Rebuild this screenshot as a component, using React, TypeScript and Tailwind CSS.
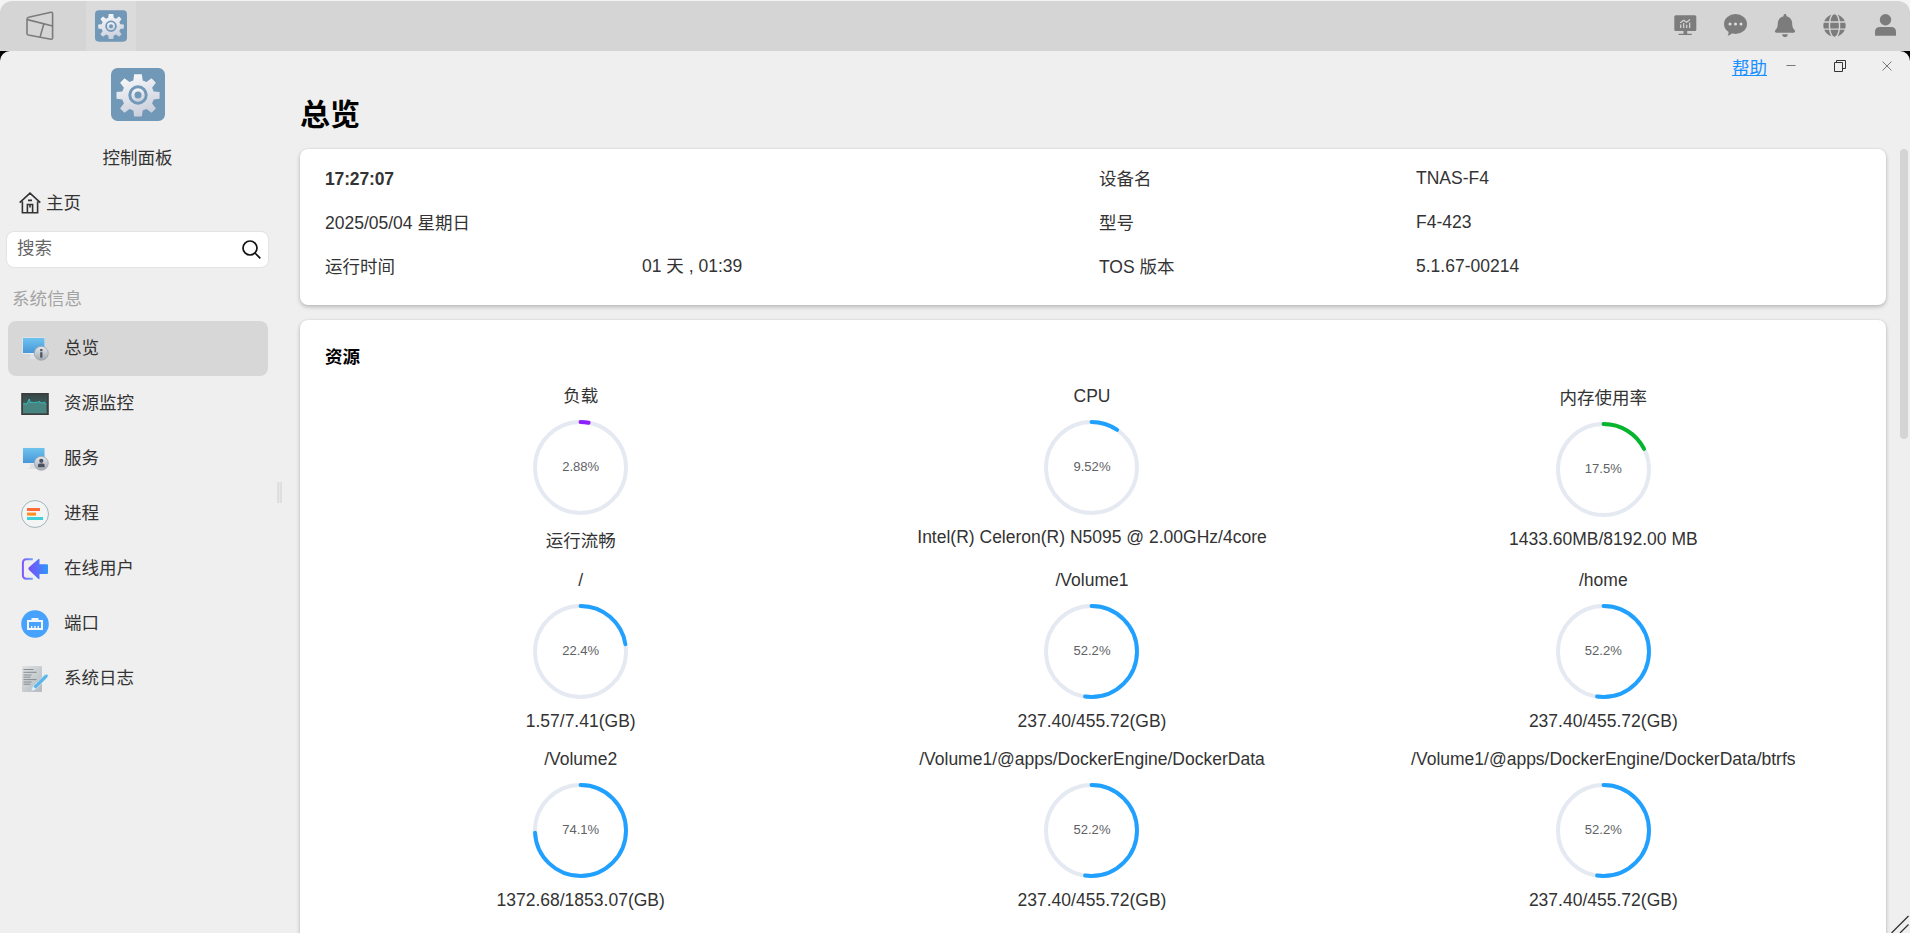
import React from 'react';
import { FaBell, FaGlobe } from 'react-icons/fa';

interface Gauge {
  title: string;
  percent: number;
  detail: string;
  color: string;
  className?: string;
  detailClassName?: string;
}

const BLUE = '#20a0ff';

const GAUGES: Gauge[] = [
  { title: '负载', percent: 2.88, detail: '运行流畅', color: '#8e1fff', detailClassName: 'pt-[4px]' },
  { title: 'CPU', percent: 9.52, detail: 'Intel(R) Celeron(R) N5095 @ 2.00GHz/4core', color: BLUE },
  { title: '内存使用率', percent: 17.5, detail: '1433.60MB/8192.00 MB', color: '#06b52d', className: 'pt-[2px]' },
  { title: '/', percent: 22.4, detail: '1.57/7.41(GB)', color: BLUE },
  { title: '/Volume1', percent: 52.2, detail: '237.40/455.72(GB)', color: BLUE },
  { title: '/home', percent: 52.2, detail: '237.40/455.72(GB)', color: BLUE },
  { title: '/Volume2', percent: 74.1, detail: '1372.68/1853.07(GB)', color: BLUE },
  { title: '/Volume1/@apps/DockerEngine/DockerData', percent: 52.2, detail: '237.40/455.72(GB)', color: BLUE },
  { title: '/Volume1/@apps/DockerEngine/DockerData/btrfs', percent: 52.2, detail: '237.40/455.72(GB)', color: BLUE },
];

/* ---------- Icons ---------- */

function GearIcon({ id, className }: { id: string; className: string }) {
  return (
    <svg viewBox="0 0 54 53" className={className}>
      <defs>
        <linearGradient id={id} x1="0.3" y1="0" x2="0.6" y2="1">
          <stop offset="0" stopColor="#f7f8fa" />
          <stop offset="1" stopColor="#c9cedb" />
        </linearGradient>
      </defs>
      <rect width="54" height="53" rx="6.5" fill="#7298b8" />
      <g fill={`url(#${id})`}>
        <path
          fillRule="evenodd"
          d="M23.2 6.2h7.6l.9 6.3 3.8 1.6 5-3.8 4.4 4.4-3.8 5 1.6 3.8 5.9.6v6.6l-5.900.9-1.600 3.800 3.800 5-4.400 4.400-5-3.800-3.800 1.600-.9 5.800h-7.600l-.9-5.800-3.800-1.600-5 3.800-4.400-4.400 3.800-5-1.600-3.800-5.800-.9v-6.600l5.800-.6 1.600-3.800-3.800-5 4.400-4.400 5 3.800 3.800-1.600zM27 17.300a9.700 9.700 0 1 0 0 19.400 9.700 9.700 0 0 0 0-19.400z"
        />
        <path fillRule="evenodd" d="M27 20.3a6.7 6.7 0 1 1 0 13.4 6.7 6.7 0 0 1 0-13.4zm0 3.2a3.5 3.5 0 1 0 0 7 3.5 3.5 0 0 0 0-7z" />
      </g>
    </svg>
  );
}

function LogoIcon() {
  return (
    <svg viewBox="0 0 28 30" className="h-[30px] w-7" fill="none" stroke="#7c7c7c" strokeWidth="1.6" strokeLinejoin="round">
      <path d="M2.6 6.2 25 1.2q1.6-.2 1.6 1.5v24q0 1.8-1.6 1.5L2.3 24Q1 23.7 1 22.2V8.2q0-1.7 1.6-2z" />
      <path d="M1.4 8.6 26.6 15M17.8 13 14 26.4" />
    </svg>
  );
}

function HomeIcon() {
  return (
    <svg viewBox="0 0 22 22" className="h-[22px] w-[22px]" fill="none" stroke="#333" strokeWidth="1.6">
      <path d="M.7 10.6 11 1.2l10.3 9.400M3.400 9.600v11.200h15.200V9.600M8.400 20.800v-8.300h5.200v8.300M9 8.400h4M11 12.600v3" />
    </svg>
  );
}

function MonitorScreen({ id }: { id: string }) {
  return (
    <>
      <defs>
        <linearGradient id={id} x1="0" y1="0" x2="0" y2="1">
          <stop offset="0" stopColor="#6fc3ee" />
          <stop offset="1" stopColor="#4797d8" />
        </linearGradient>
        <linearGradient id={`${id}-badge`} x1="0" y1="0" x2="0" y2="1">
          <stop offset="0" stopColor="#e6e9ed" />
          <stop offset="1" stopColor="#a4abb3" />
        </linearGradient>
      </defs>
      <path d="M9 19h8v3.500l2 1.500H5.500l3.500-1.700z" fill="#dfe2e5" />
      <rect x="1.500" y="2.500" width="22.500" height="16.500" fill="#e6eef4" />
      <rect x="2" y="3" width="21.500" height="15" fill={`url(#${id})`} />
      <circle cx="20.300" cy="18.300" r="7" fill={`url(#${id}-badge)`} stroke="#8f979f" strokeWidth=".6" />
    </>
  );
}

function OverviewIcon() {
  return (
    <svg viewBox="0 0 28 28" className="h-7 w-7">
      <MonitorScreen id="overview-screen" />
      <rect x="19.200" y="14" width="2.200" height="2.200" fill="#4c5360" />
      <rect x="19.200" y="17.200" width="2.200" height="5.500" fill="#4c5360" />
    </svg>
  );
}

function ServiceIcon() {
  return (
    <svg viewBox="0 0 28 28" className="h-7 w-7">
      <MonitorScreen id="service-screen" />
      <circle cx="20.300" cy="15.800" r="2.100" fill="#4c5360" />
      <path d="M17 22.200v-2.300q0-1.500 1.500-1.500h3.600q1.500 0 1.500 1.500v2.300z" fill="#4c5360" />
    </svg>
  );
}

function ResourceIcon() {
  return (
    <svg viewBox="0 0 28 28" className="h-7 w-7">
      <defs>
        <linearGradient id="resource-bg" x1="0" y1="0" x2="0" y2="1">
          <stop offset="0" stopColor="#374747" />
          <stop offset="1" stopColor="#44706f" />
        </linearGradient>
      </defs>
      <rect x=".2" y="3" width="27.600" height="22" fill="#3b3d3d" />
      <rect x="2" y="4.800" width="24" height="18.400" fill="url(#resource-bg)" />
      <path d="M2 14l2-.5 1.500 1 1.300-2.500 1.500-3 1.200 4 1.500-1 1.500.8 2-.6 2 .2 1.500-1.100 2 1.500h2l1.500-.5 1.500 2.500v8.400H2z" fill="#488480" />
      <path d="M2 14l2-.5 1.500 1 1.300-2.500 1.500-3 1.200 4 1.500-1 1.500.8 2-.6 2 .2 1.500-1.100 2 1.500h2l1.500-.5 1.500 2.500" fill="none" stroke="#35c4c4" strokeWidth=".9" />
    </svg>
  );
}

function ProcessIcon() {
  return (
    <svg viewBox="0 0 28 28" className="h-7 w-7">
      <circle cx="14" cy="14" r="13.500" fill="#f3f4f4" stroke="#8da3a9" strokeWidth=".8" />
      <rect x="6" y="8" width="13" height="3" fill="#ff6a39" />
      <rect x="6" y="12.600" width="9" height="3" fill="#ff8d1f" />
      <rect x="6" y="17" width="16" height="3" fill="#42d0d8" />
    </svg>
  );
}

function OnlineUserIcon() {
  return (
    <svg viewBox="0 0 28 28" className="h-7 w-7">
      <defs>
        <linearGradient id="online-user" x1="0" y1="0" x2="1" y2="0">
          <stop offset="0" stopColor="#7a4dfb" />
          <stop offset="1" stopColor="#2f97fa" />
        </linearGradient>
        <linearGradient id="online-frame" gradientUnits="userSpaceOnUse" x1="1" y1="0" x2="12" y2="0">
          <stop offset="0" stopColor="#8450fa" />
          <stop offset="1" stopColor="#64a9f8" />
        </linearGradient>
      </defs>
      <path d="M11.800 4.300H5.500Q1.900 4.300 1.900 8v12q0 3.700 3.600 3.700h6.300" fill="none" stroke="url(#online-frame)" strokeWidth="2" />
      <path d="M7.400 13.500q0-.7.600-1.300l9.200-8q1.300-1 1.300.6v4.500h7.500q1 0 1 1V18q0 1-1 1h-7.500v4.200q0 1.600-1.300.6L8 15q-.6-.7-.6-1.500z" fill="url(#online-user)" />
    </svg>
  );
}

function PortIcon() {
  return (
    <svg viewBox="0 0 28 28" className="h-7 w-7">
      <circle cx="14" cy="14" r="13.800" fill="#46a2fd" />
      <path fillRule="evenodd" d="M10.500 8h7v2H22v10H6V10h4.500zM8 12v6h2v-2h1.300v2h1.900v-2h1.500v2h1.900v-2H18v2h2v-6z" fill="#f3f7fb" />
    </svg>
  );
}

function LogIcon() {
  return (
    <svg viewBox="0 0 28 28" className="h-7 w-7">
      <defs>
        <linearGradient id="log-paper" x1="0" y1="0" x2="1" y2="1">
          <stop offset="0" stopColor="#dfe2e4" />
          <stop offset="1" stopColor="#b3babf" />
        </linearGradient>
      </defs>
      <rect x="1" y="1" width="20" height="26" rx="1" fill="url(#log-paper)" />
      <path d="M2.500 4.500h10M2.500 7.300h13M2.500 10h8M2.500 12.200h7M2.500 14.600h13M2.500 17h8M2.500 19.200h7" stroke="#7d8388" strokeWidth=".9" />
      <path d="m10.800 25.400 1.400-4.200L23.600 10l2.600-1 1 1.400-1 2.400-11.400 11.200z" fill="#5cb5e6" stroke="#d5edf8" strokeWidth=".7" />
      <path d="m10.800 25.400 1.400-4.200 2.600 2.800z" fill="#e9f3f8" />
    </svg>
  );
}

function ScreenChartIcon() {
  return (
    <svg viewBox="0 0 23 21" className="h-[21px] w-[23px]">
      <rect x=".3" y=".3" width="22" height="15.700" rx="1.500" fill="#7c7c7c" />
      <path d="M9.500 16h3.700v2.800h4.600V20H4.600v-1.200h4.900z" fill="#7c7c7c" />
      <path d="M6.700 13V9.500M9.700 13V8M12.700 13V9.800M15.700 13V7.500M6.200 7.800l3.500-2.500 2.800 1.900L16 4.500" fill="none" stroke="#d5d5d5" strokeWidth="1.200" />
    </svg>
  );
}

function ChatIcon() {
  return (
    <svg viewBox="0 0 23 22" className="h-[22px] w-[23px]">
      <path d="M1.500 14.500Q5 17 4.600 17.800q.2 2.300-1 4 2.400-.3 4.200-2.300l4-2z" fill="#7c7c7c" />
      <ellipse cx="11.500" cy="10" rx="11.500" ry="10" fill="#7c7c7c" />
      <g fill="#dedede">
        <circle cx="6" cy="10" r="1.500" />
        <circle cx="11.500" cy="10" r="1.500" />
        <circle cx="17" cy="10" r="1.500" />
      </g>
    </svg>
  );
}

function UserIcon() {
  return (
    <svg viewBox="0 0 21 22" className="h-[22px] w-[21px]" fill="#7c7c7c">
      <circle cx="10.500" cy="5.800" r="5.700" />
      <path d="M0 21.800v-4Q0 13 5 13h11q5 0 5 4.800v4z" />
    </svg>
  );
}

/* ---------- Layout parts ---------- */

const MENU = [
  { label: '总览', icon: <OverviewIcon />, active: true },
  { label: '资源监控', icon: <ResourceIcon /> },
  { label: '服务', icon: <ServiceIcon /> },
  { label: '进程', icon: <ProcessIcon /> },
  { label: '在线用户', icon: <OnlineUserIcon /> },
  { label: '端口', icon: <PortIcon /> },
  { label: '系统日志', icon: <LogIcon /> },
];

function TopBar() {
  return (
    <header className="mt-px flex h-[50px] shrink-0 items-center justify-between rounded-t-[12px] bg-[#d5d5d5]">
      <div className="flex h-full items-center">
        <div className="flex w-[86px] justify-start pl-[26px]">
          <LogoIcon />
        </div>
        <div className="flex h-full w-[50px] items-center justify-center bg-[#dbdbdb]">
          <GearIcon id="gear-small" className="h-8 w-8" />
        </div>
      </div>
      <div className="flex items-center pr-[14px] pb-[2px] text-[#7c7c7c]">
        <div className="flex w-[50px] justify-start"><ScreenChartIcon /></div>
        <div className="flex w-[50px] justify-start"><ChatIcon /></div>
        <div className="flex w-[49px] justify-start"><FaBell className="h-[23px] w-[22px]" /></div>
        <div className="flex w-[52px] justify-start"><FaGlobe className="h-[23px] w-[23px]" /></div>
        <UserIcon />
      </div>
    </header>
  );
}

function Sidebar() {
  return (
    <aside className="flex w-[276px] shrink-0 flex-col">
      <div className="flex flex-col items-center pt-[17px] pr-px">
        <GearIcon id="gear-large" className="h-[53px] w-[54px]" />
        <div className="mt-[24px] h-[26px] leading-[26px]">控制面板</div>
      </div>
      <div className="mt-[19px] flex h-[26px] items-center gap-[5px] pl-[19px]">
        <HomeIcon />
        <span>主页</span>
      </div>
      <div className="mt-[16px] ml-[7px] flex h-[35px] w-[261px] items-center justify-between rounded-[7px] bg-white pr-[7px] pl-[10px] text-[#666] shadow-[0_0_1px_1px_rgba(0,0,0,0.05)]">
        <span className="-mt-[3px]">搜索</span>
        <svg viewBox="0 0 19 19" className="h-[19px] w-[19px]" fill="none" stroke="#111" strokeWidth="1.7">
          <circle cx="8" cy="8" r="7" />
          <path d="m13 13 5.300 5.300" />
        </svg>
      </div>
      <div className="mt-[19px] h-[26px] pl-[12px] leading-[26px] text-[#a3a3a3]">系统信息</div>
      <nav className="mt-[9px] ml-2 w-[260px]">
        {MENU.map((item) => (
          <div
            key={item.label}
            className={
              item.active
                ? 'flex h-[55px] items-center gap-[15px] rounded-[8px] bg-[#d7d7d7] pl-[13px]'
                : 'flex h-[55px] items-center gap-[15px] pl-[13px]'
            }
          >
            {item.icon}
            <span className="-mt-px">{item.label}</span>
          </div>
        ))}
      </nav>
    </aside>
  );
}

function WindowControls() {
  return (
    <div className="flex h-[31px] items-start justify-end pt-[3px] pr-[18px]">
      <a className="mt-px mr-[19px] h-[26px] leading-[26px] text-[#1890ff] underline">帮助</a>
      <svg viewBox="0 0 10 12" className="mt-[6px] mr-[38px] h-3 w-[10px]" stroke="#777">
        <path d="M.5 5.500h9" />
      </svg>
      <svg viewBox="0 0 12 12" className="mt-[6px] mr-[36px] h-3 w-3" fill="none" stroke="#333">
        <path d="M.5 2.500h8v9h-8zM2.500 2.500v-2h9v8h-3" />
      </svg>
      <svg viewBox="0 0 10 12" className="mt-[6px] h-3 w-[10px]" stroke="#777">
        <path d="m.5 1.500 9 9M9.500 1.500l-9 9" />
      </svg>
    </div>
  );
}

function InfoCard() {
  return (
    <section className="flex h-[156px] shrink-0 rounded-[8px] bg-white px-[25px] pt-[8px] shadow-[0_2px_4px_rgba(0,0,0,0.22),0_0_2px_rgba(0,0,0,0.1)]">
      <div className="grid w-[774px] auto-rows-[44px] grid-cols-[317px_1fr] leading-[44px]">
        <strong className="col-span-2 tracking-[-0.15px]">17:27:07</strong>
        <span className="col-span-2">2025/05/04 星期日</span>
        <span>运行时间</span>
        <span className="-mt-px">01 天 , 01:39</span>
      </div>
      <div className="grid flex-1 auto-rows-[44px] grid-cols-[317px_1fr] leading-[44px]">
        <span>设备名</span>
        <span className="-mt-px">TNAS-F4</span>
        <span>型号</span>
        <span className="-mt-px">F4-423</span>
        <span>TOS 版本</span>
        <span className="-mt-px">5.1.67-00214</span>
      </div>
    </section>
  );
}

function GaugeItem({ title, percent, detail, color, className, detailClassName }: Gauge) {
  const radius = 45.5;
  const length = 2 * Math.PI * radius;

  return (
    <div className={`flex flex-col items-center ${className ?? ''}`}>
      <div className="h-[26px] leading-[26px] whitespace-nowrap">{title}</div>
      <div className="mt-[11px] grid h-[95px] w-[95px] place-items-center">
        <svg viewBox="0 0 95 95" className="col-start-1 row-start-1 h-[95px] w-[95px] -rotate-90" fill="none" strokeWidth="3.900">
          <circle cx="47.500" cy="47.500" r={radius} stroke="#e5e9f2" />
          <circle
            cx="47.500"
            cy="47.500"
            r={radius}
            stroke={color}
            strokeLinecap="round"
            strokeDasharray={`${(length * percent) / 100} ${length}`}
          />
        </svg>
        <span className="col-start-1 row-start-1 -mt-[2px] text-[13.05px] text-[#606266]">{percent}%</span>
      </div>
      <div className={`mt-[9px] leading-[26px] whitespace-nowrap ${detailClassName ?? ''}`}>{detail}</div>
    </div>
  );
}

function ResourceCard() {
  return (
    <section className="h-[640px] shrink-0 rounded-[8px] bg-white px-[25px] pt-[24px] shadow-[0_2px_4px_rgba(0,0,0,0.22),0_0_2px_rgba(0,0,0,0.1)]">
      <h2 className="h-[26px] leading-[26px] font-bold text-black">资源</h2>
      <div className="mt-[13px] grid w-[1534px] grid-cols-3 grid-rows-[184px_179px_179px]">
        {GAUGES.map((gauge) => (
          <GaugeItem key={gauge.title} {...gauge} />
        ))}
      </div>
    </section>
  );
}

export default function App() {
  return (
    <div className="flex h-[933px] w-[1910px] flex-col overflow-hidden bg-[#f4f4f4] font-['Liberation_Sans','Noto_Sans_CJK_SC',sans-serif] text-[17.5px] text-[#333]">
      <TopBar />
      <div className="min-h-0 flex-1 bg-black">
        <div className="relative flex h-full overflow-hidden rounded-t-[10px] bg-[#efefef]">
          <Sidebar />
          {/* Sidebar drag handle */}
          <div className="mt-[431px] ml-px h-[21px] w-[5px] border-x-2 border-[#dfdfdf] bg-[#e6e6e6]" />
          <main className="flex min-w-0 flex-1 flex-col">
            <WindowControls />
            <h1 className="ml-[18px] h-[67px] pt-[11px] text-[30px] leading-[44px] font-bold text-black">总览</h1>
            <div className="flex min-h-0 flex-1">
              <div className="flex w-[1604px] flex-col gap-[15px] pl-[18px]">
                <InfoCard />
                <ResourceCard />
              </div>
              {/* Scrollbar */}
              <div className="ml-[14px] h-[290px] w-2 rounded-full bg-[#d3d4d6]" />
            </div>
          </main>
          {/* Resize grip */}
          <svg viewBox="0 0 20 20" className="absolute right-0 bottom-0 h-5 w-5" stroke="#333" strokeWidth="1.300">
            <path d="M1.500 20 18.500 3M10 20l8.500-8.500" />
          </svg>
        </div>
      </div>
    </div>
  );
}
